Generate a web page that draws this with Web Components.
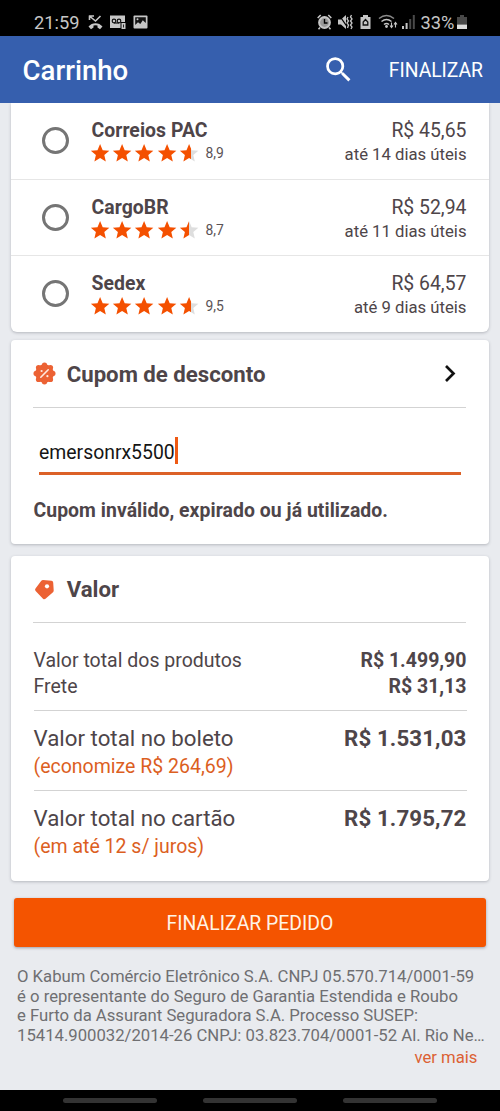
<!DOCTYPE html>
<html lang="pt-BR">
<head>
<meta charset="utf-8">
<title>Carrinho</title>
<style>
html,body{margin:0;height:100%;background:#e9ebef;font-family:Roboto,sans-serif;color:#4e4549;overflow:hidden}
</style>
</head>
<body>
<cart-screen></cart-screen>
<script>
const define = (name, html, setup) => customElements.define(name, class extends HTMLElement {
  constructor() {
    super();
    const t = document.createElement('template');
    t.innerHTML = html;
    this.attachShadow({mode: 'open'}).appendChild(t.content.cloneNode(true));
  }
  connectedCallback() { if (setup) setup(this, this.shadowRoot); }
});

define('status-bar', `
<style>
:host{display:flex;box-sizing:border-box;height:36px;background:#000;color:#c6c6c6;padding:10px 33.500px 0 34px;font-size:18.3px;line-height:26px;align-items:flex-start;flex:none}
svg{display:block;flex:none}
.l,.r{display:flex;align-items:flex-start}
.r{margin-left:auto}
</style>
<div class="l"><span style="width:54px">21:59</span>
<svg width="15" height="16" style="margin-top:4px" viewBox="0 0 15 16"><path d="M1.500 1.500v4.500M1 2h5M2 2.500l5.500 4.500L12.500 2" fill="none" stroke="#c6c6c6" stroke-width="1.600"/><path d="M.5 12.500C4 8 11 8 14.500 12.500L12 15.200 9.500 13.400V11.600Q7.500 11 5.500 11.600V13.400L3 15.200Z" fill="#c6c6c6"/></svg>
<svg width="17" height="16" style="margin:4px 0 0 6px" viewBox="0 0 17 16"><path d="M1 1.500H16V8H11.500V14H1Z" fill="#c6c6c6"/><g fill="none" stroke="#111" stroke-width="1.200"><circle cx="5" cy="7" r="1.800"/><circle cx="10" cy="7" r="1.800"/><path d="M5 9h5"/></g><path d="M12.500 9h4v6h-4z" fill="#c6c6c6"/><path d="M14.500 10.500v3" stroke="#222" stroke-width="1"/></svg>
<svg width="15" height="16" style="margin:4px 0 0 7px" viewBox="0 0 15 16"><rect x=".5" y="1.500" width="14" height="13" rx="1" fill="#c6c6c6"/><path d="M2.200 3.200H12.800V9L9.800 6.200 7.300 10 5 8.300 2.200 11Z" fill="#111"/><circle cx="4.500" cy="5.200" r="1" fill="#c6c6c6"/></svg></div>
<div class="r">
<svg width="15" height="16" style="margin:4px 6px 0 0" viewBox="0 0 15 16"><circle cx="7.500" cy="8.500" r="5.400" fill="#999" stroke="#c6c6c6" stroke-width="2"/><path d="M7.500 5v4H10.500" fill="none" stroke="#000" stroke-width="1.400"/><path d="M.7 4L3.700 1M14.300 4L11.300 1M3 13.500L1.500 15.200M12 13.500L13.500 15.200" stroke="#c6c6c6" stroke-width="1.600"/></svg>
<svg width="15" height="16" style="margin:4px 7px 0 0" viewBox="0 0 15 16"><path d="M0 5.500H3L8 1V15L3 10.500H0Z" fill="#c6c6c6"/><path d="M1 1L10 14" stroke="#000" stroke-width="1.300"/><path d="M10 3l-1 2 1.500 2-1.500 2 1.500 2-1 3M13.500 1l-1 2 1.500 2-1.500 2 1.500 2-1.500 2 1.500 2-1 2" fill="none" stroke="#c6c6c6" stroke-width="1.300"/></svg>
<svg width="11" height="16" style="margin:4px 7px 0 0" viewBox="0 0 11 16"><path d="M.5 3H3V1H8V3H10.500V15H.5Z" fill="#c6c6c6"/><path d="M3.200 11V8L5.500 5.500 7.800 8V11Z" fill="none" stroke="#111" stroke-width="1.300"/></svg>
<svg width="20" height="16" style="margin:4px 4px 0 0" viewBox="0 0 20 16"><g fill="none" stroke="#8a8a8a" stroke-width="1.500"><path d="M1 4.500Q8.500-1.500 16 4.500"/><path d="M3.500 7.500Q8.500 3.500 13.500 7.500" stroke="#c6c6c6"/><path d="M6 10.500Q8.500 8.500 11 10.500" stroke="#c6c6c6"/></g><circle cx="8.500" cy="12.500" r="1.400" fill="#c6c6c6"/><path d="M13.500 8.500V13M12 11.500L13.500 13.500 15 11.500M17.500 13.500V9M16 10.500L17.500 8.500 19 10.500" fill="none" stroke="#c6c6c6" stroke-width="1.100"/></svg>
<svg width="13" height="16" style="margin:4px 6px 0 0" viewBox="0 0 13 16"><path d="M0 12h2v3H0zM3.600 9h2v6h-2z" fill="#c6c6c6"/><path d="M7.200 5h2v10h-2zM10.800 1h2v14h-2z" fill="#4a4a4a"/></svg>
<span style="width:36px;white-space:nowrap">33%</span>
<svg width="10" height="16" style="margin-top:4px" viewBox="0 0 10 16"><path d="M0 3H3V1H7V3H10V10.500H0Z" fill="#484848"/><path d="M0 10.500H10V15H0Z" fill="#dcdcdc"/></svg>
</div>`);

define('app-header', `
<style>
:host{display:flex;box-sizing:border-box;height:67px;background:#365fae;color:#fff;padding:0 17px 0 22.500px;align-items:center;flex:none;position:relative;z-index:1}
h1{margin:0;font-size:27.600px;font-weight:500;line-height:32px;flex:1;padding-top:3px}
svg{width:33.300px;height:33.300px;margin-right:34px;display:block}
span{font-size:19.300px;padding-top:2px}
</style>
<h1><slot></slot></h1>
<svg viewBox="0 0 24 24" fill="#fff"><path d="M15.500 14h-.79l-.28-.27A6.471 6.471 0 0 0 16 9.500 6.500 6.500 0 1 0 9.500 16c1.610 0 3.090-.59 4.230-1.570l.27.28v.79l5 4.990L20.490 19l-4.990-5zm-6 0C7.010 14 5 11.990 5 9.500S7.010 5 9.500 5 14 7.010 14 9.500 11.990 14 9.500 14z"/></svg>
<span><slot name="action"></slot></span>`);

define('ui-card', `
<style>
:host{display:block;box-sizing:border-box;background:#fff;border-radius:4px;box-shadow:0 1px 3px rgba(60,64,75,.3);flex:none}
</style><slot></slot>`);

const STAR = 'M12 17.270L18.180 21l-1.640-7.030L22 9.240l-7.190-.61L12 2 9.190 8.630 2 9.240l5.460 4.730L5.820 21z';
define('star-rating', `
<style>
:host{display:flex;height:24px;align-items:center;margin-top:-2px}
svg{width:22.200px;height:22.500px;display:block;margin-top:1px}
b{font-weight:400;font-size:13.900px;line-height:22px;margin-left:5.500px;color:#5b5356}
</style><b></b>`, (el, root) => {
  const b = root.querySelector('b');
  if (root.querySelector('svg')) return;
  b.textContent = el.getAttribute('score');
  const part = Number(el.getAttribute('part'));
  for (let i = 0; i < 5; i++) {
    const t = document.createElement('template');
    t.innerHTML = i < 4
      ? `<svg viewBox="0 0 24 24"><path d="${STAR}" fill="#f45000"/></svg>`
      : `<svg viewBox="0 0 24 24"><defs><linearGradient id="g"><stop offset="${part}" stop-color="#f45000"/><stop offset="${part}" stop-color="#dedede"/></linearGradient></defs><path d="${STAR}" fill="url(#g)"/></svg>`;
    root.insertBefore(t.content, b);
  }
});

define('shipping-option', `
<style>
:host{display:flex;box-sizing:border-box;height:76px;padding:16px 22.500px 0 31px;border-bottom:1px solid #e6e6e6;align-items:flex-start}
:host(:first-child){height:77px}
:host(:last-child){border-bottom:0}
i{box-sizing:border-box;width:27px;height:27px;border:3px solid #757575;border-radius:50%;margin:8px 20px 0 0}
.n{font-weight:700;font-size:19.400px;line-height:24px;padding-left:2.500px;letter-spacing:.05px}
.p{margin-left:auto;text-align:right;font-size:19.400px;line-height:24px}
.d{font-size:16.700px;line-height:26px;margin-top:-1px}
</style>
<i></i><div><div class="n"><slot></slot></div><slot name="stars"></slot></div>
<div class="p"><slot name="price"></slot><div class="d"><slot name="days"></slot></div></div>`);

define('card-title', `
<style>
:host{display:flex;box-sizing:border-box;height:68px;align-items:center;border-bottom:1px solid #d3d3d3;font-weight:700;font-size:22.200px;line-height:26px;margin:0 23px 0 22px}
.i{width:33.700px;flex:none}
.e{margin-left:auto;padding-right:9px}
::slotted(svg){display:block}
</style>
<span class="i"><slot name="icon"></slot></span><span><slot></slot></span><span class="e"><slot name="end"></slot></span>`);

define('coupon-field', `
<style>
:host{display:flex;box-sizing:border-box;height:47px;margin:20px 28px 0;border-bottom:3px solid #dc6127;color:#151515;font-size:19.400px;line-height:32px;padding-top:9px}
i{width:3px;height:27px;background:#ee5a14}
</style><slot></slot><i></i>`);

define('value-line', `
<style>
:host{display:flex;justify-content:space-between;margin:0 22.500px;font-size:19.500px;line-height:26px}
:host([big]){box-sizing:border-box;height:80px;padding-top:14px;font-size:22.300px;line-height:29px;background:linear-gradient(#d3d3d3,#d3d3d3) top/100% 1px no-repeat}
.v{font-weight:700}
:host([big]) .v{letter-spacing:.1px}
.n{font-size:19.500px;line-height:28px;color:#dc5f1f}
</style>
<div><slot></slot><div class="n"><slot name="note"></slot></div></div><div class="v"><slot name="value"></slot></div>`, (el, root) => {
  if (!el.hasAttribute('big')) root.querySelector('.n').style.display = 'none';
});

define('primary-button', `
<style>
:host{display:block;margin:17px 3px 0;height:49px;background:#f45400;border-radius:3px;box-shadow:0 1px 3px rgba(50,50,70,.4);color:#fff3e6;text-align:center;font-size:19.400px;line-height:52px;flex:none}
</style><slot></slot>`);

define('legal-note', `
<style>
:host{display:block;margin:20px 0 0 6px;font-size:16.700px;line-height:19.500px;color:#6f6f72;white-space:nowrap;flex:none}
.m{color:#dc6134;text-align:right;padding-right:11.500px;line-height:24px;margin-top:1px}
</style><slot></slot><div class="m"><slot name="more"></slot></div>`);

define('nav-bar', `
<style>
:host{display:flex;box-sizing:border-box;height:21px;background:#000;justify-content:center;gap:46px;padding-top:8px;flex:none}
i{width:94px;height:5px;border-radius:2.500px;background:#333}
</style><i></i><i></i><i></i>`);

define('cart-screen', `
<style>
:host{display:flex;flex-direction:column;width:500px;height:1111px}
main{flex:1;min-height:0;overflow:hidden;display:flex;flex-direction:column;padding:0 11px}
</style>
<status-bar></status-bar>
<app-header>Carrinho<span slot="action">FINALIZAR</span></app-header>
<main>
<ui-card style="height:229px;border-radius:0 0 6px 6px">
<shipping-option>Correios PAC<star-rating slot="stars" score="8,9" part=".62"></star-rating><span slot="price">R$ 45,65</span><span slot="days">até 14 dias úteis</span></shipping-option>
<shipping-option>CargoBR<star-rating slot="stars" score="8,7" part=".51"></star-rating><span slot="price">R$ 52,94</span><span slot="days">até 11 dias úteis</span></shipping-option>
<shipping-option>Sedex<star-rating slot="stars" score="9,5" part=".62"></star-rating><span slot="price">R$ 64,57</span><span slot="days">até 9 dias úteis</span></shipping-option>
</ui-card>
<ui-card style="height:204px;margin-top:8px">
<card-title><svg slot="icon" width="23" height="23" viewBox="-11.500 -11.500 23 23"><g fill="#ec6234"><circle r="9.300"/><g id="bumps"><circle cy="-8.300" r="2.700"/><circle cy="8.300" r="2.700"/><circle cx="-8.300" r="2.700"/><circle cx="8.300" r="2.700"/><circle cx="5.900" cy="5.900" r="2.700"/><circle cx="-5.900" cy="5.900" r="2.700"/><circle cx="5.900" cy="-5.900" r="2.700"/><circle cx="-5.900" cy="-5.900" r="2.700"/></g></g><path d="M-3.700 3.700L3.700-3.700" stroke="#ffe9df" stroke-width="1.600" stroke-linecap="round"/><circle cx="-2.900" cy="-2.500" r="1.100" fill="#ffe9df"/><circle cx="2.900" cy="2.700" r="1.100" fill="#ffe9df"/></svg>Cupom de desconto<svg slot="end" width="13" height="19" viewBox="0 0 13 19"><path d="M2 2L9.500 9.500 2 17" fill="none" stroke="#111" stroke-width="2.700"/></svg></card-title>
<coupon-field>emersonrx5500</coupon-field>
<div style="font-weight:700;font-size:19.400px;line-height:26px;letter-spacing:.05px;margin:23px 0 0 22.500px;white-space:nowrap">Cupom inválido, expirado ou já utilizado.</div>
</ui-card>
<ui-card style="height:325px;margin-top:12px">
<card-title style="height:67px"><svg slot="icon" width="23" height="23" viewBox="0 0 23 23"><path d="M2.500 10.500L8.300 2.800Q9 2 10 2L18.500 2.800Q20 3 20.200 4.500L20.700 12.500Q20.700 13.500 20 14.200L12.500 20.800Q11.200 21.800 10 20.700L2.600 13Q1.500 11.800 2.500 10.500Z" fill="#ec6234"/><circle cx="14" cy="8.300" r="2.100" fill="#fff"/></svg>Valor</card-title>
<div style="padding:25px 0 10px">
<value-line>Valor total dos produtos<span slot="value">R$ 1.499,90</span></value-line>
<value-line>Frete<span slot="value">R$ 31,13</span></value-line>
</div>
<value-line big>Valor total no boleto<span slot="note">(economize R$ 264,69)</span><span slot="value">R$ 1.531,03</span></value-line>
<value-line big>Valor total no cartão<span slot="note">(em até 12 s/ juros)</span><span slot="value">R$ 1.795,72</span></value-line>
</ui-card>
<primary-button>FINALIZAR PEDIDO</primary-button>
<legal-note>O Kabum Comércio Eletrônico S.A. CNPJ 05.570.714/0001-59<br>é o representante do Seguro de Garantia Estendida e Roubo<br>e Furto da Assurant Seguradora S.A. Processo SUSEP:<br>15414.900032/2014-26 CNPJ: 03.823.704/0001-52 Al. Rio Ne…<span slot="more">ver mais</span></legal-note>
</main>
<nav-bar></nav-bar>`);
</script>
</body>
</html>
